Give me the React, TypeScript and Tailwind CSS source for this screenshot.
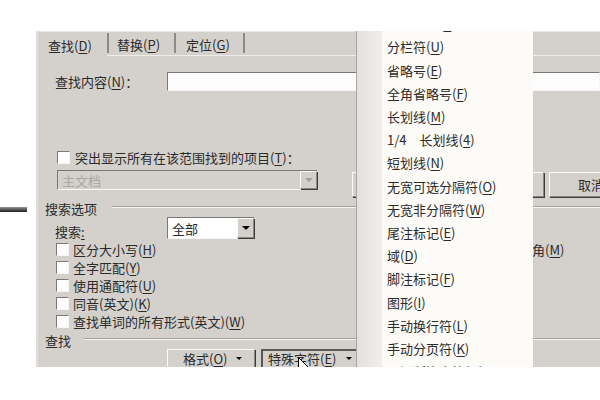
import React from 'react';

// Classic 3D edges, Windows 2000 style.
const sunken =
  'border border-t-[#7b7975] border-l-[#7b7975] border-b-[#f7f6f4] border-r-[#f7f6f4]';
const raised =
  'border border-t-[#fbfaf8] border-l-[#fbfaf8] border-b-[#8a8884] border-r-[#8a8884] shadow-[1px_1px_0_#3d3c3a]';

/** `label(K)` with the access key underlined. */
function Key({ label, k }: { label: string; k: string }) {
  return (
    <>
      {label}(<span className="underline underline-offset-2">{k}</span>)
    </>
  );
}

function Check({
  label,
  k,
  gap = 'ml-[4px]',
  colon,
}: {
  label: string;
  k: string;
  gap?: string;
  colon?: boolean;
}) {
  return (
    <div className="flex h-[18px] items-center">
      <span className={`h-[13px] w-[13px] shrink-0 bg-white ${sunken}`} />
      <span className={`${gap} whitespace-nowrap`}>
        <Key label={label} k={k} />
        {colon && '：'}
      </span>
    </div>
  );
}

function Arrow({ disabled }: { disabled?: boolean }) {
  return (
    <span
      className={`flex h-full w-[17px] shrink-0 items-center justify-center bg-[#d4d1cc] ${raised}`}
    >
      <span
        className={
          disabled
            ? 'border-x-[4px] border-t-[4px] border-x-transparent border-t-[#a19e99]'
            : 'border-x-[4px] border-t-[4px] border-x-transparent border-t-black'
        }
      />
    </span>
  );
}

function Separator() {
  return <div className="my-[2px] w-[2px] shrink-0 self-stretch bg-[#8d8a86]" />;
}

function GroupLine({ label, gap }: { label: string; gap: string }) {
  return (
    <div className="flex h-[14px] items-center pl-[9px]">
      <span className="shrink-0">{label}</span>
      <div
        className={`${gap} mb-[3px] h-[2px] flex-1 border-t border-b border-t-[#a5a29d] border-b-[#f4f2ef]`}
      />
    </div>
  );
}

const SPECIALS: [string, string][] = [
  ['段落符号', 'A'],
  ['分栏符', 'U'],
  ['省略号', 'E'],
  ['全角省略号', 'F'],
  ['长划线', 'M'],
  ['1/4\u3000长划线', '4'],
  ['短划线', 'N'],
  ['无宽可选分隔符', 'O'],
  ['无宽非分隔符', 'W'],
  ['尾注标记', 'E'],
  ['域', 'D'],
  ['脚注标记', 'F'],
  ['图形', 'I'],
  ['手动换行符', 'L'],
  ['手动分页符', 'K'],
  ['不间断连字符', 'H'],
];

function SpecialMenu() {
  return (
    <div className="absolute top-0 bottom-0 left-[320px] flex">
      {/* the pale band the menu drags along its left side */}
      <div className="w-[26px] border-l border-[#a9a6a1] bg-linear-to-r from-[#e3e1dd] to-[#f1efec]" />
      <div className="w-[151px] overflow-hidden bg-[#fdfbf8]">
        <div className="mt-[-18.8px]">
          {SPECIALS.map(([label, k], i) => (
            <div key={i} className="flex h-[23.2px] items-center pl-[5px] whitespace-nowrap">
              <Key label={label} k={k} />
            </div>
          ))}
        </div>
      </div>
    </div>
  );
}

function Cursor() {
  return (
    <svg
      className="absolute top-[326px] left-[262px]"
      width="12"
      height="18"
      viewBox="0 0 12 18"
    >
      <path
        d="M0.5 0.5 L0.5 15 L4 11.5 L6.5 17 L8.5 16 L6 10.5 L10.5 10.5 Z"
        fill="white"
        stroke="black"
      />
    </svg>
  );
}

function FindDialog() {
  return (
    <div className="relative flex-1 overflow-hidden bg-[#d4d1cc] shadow-[inset_2px_0_0_#e3e0dc,inset_0_1px_0_#e8e6e2]">
      {/* tabs */}
      <div className="flex h-[25px]">
        <div className="flex w-[71px] shrink-0 items-center pt-[3px] pl-[12px]">
          <Key label="查找" k="D" />
        </div>
        <div className="flex flex-1 border-b border-[#efedea]">
          <Separator />
          <div className="flex w-[65px] shrink-0 items-center pt-[3px] pl-[8px]">
            <Key label="替换" k="P" />
          </div>
          <Separator />
          <div className="flex w-[67px] shrink-0 items-center pt-[3px] pl-[10px]">
            <Key label="定位" k="G" />
          </div>
          <Separator />
          <div className="flex-1" />
        </div>
      </div>

      {/* find what */}
      <div className="mt-[16px] flex h-[19px] items-center">
        <span className="w-[131px] shrink-0 pl-[19px]">
          <Key label="查找内容" k="N" />：
        </span>
        <div className={`h-[19px] flex-1 bg-[#fdfdfd] ${sunken}`} />
      </div>

      <div className="mt-[57px] pl-[21px]">
        <Check label="突出显示所有在该范围找到的项目" k="T" gap="ml-[5px]" colon />
      </div>

      <div className="mt-[4px] flex h-[27px] items-start">
        <div className={`ml-[21px] flex h-[20px] w-[261px] shrink-0 items-center ${sunken}`}>
          <span className="flex-1 pl-[4px] text-[#a9a7a3]">主文档</span>
          <Arrow disabled />
        </div>
        <div className={`mt-[2px] ml-[34px] h-[25px] w-[192px] shrink-0 ${raised}`} />
        <div
          className={`mt-[2px] ml-[5px] flex h-[25px] w-[100px] shrink-0 items-center pl-[28px] ${raised}`}
        >
          取消
        </div>
      </div>

      <div className="mt-[4px]">
        <GroupLine label="搜索选项" gap="ml-[15px]" />
      </div>

      <div className="mt-[2px] flex h-[22px] items-center">
        <span className="w-[131px] shrink-0 pt-[6px] pl-[19px]">
          搜索<span className="underline underline-offset-2">:</span>
        </span>
        <div className={`flex h-[22px] w-[88px] shrink-0 items-center bg-white ${sunken}`}>
          <span className="flex-1 pl-[4px]">全部</span>
          <Arrow />
        </div>
      </div>

      <div className="mt-[1px] pl-[20px]">
        <div className="flex">
          <div className="w-[402px] shrink-0">
            <Check label="区分大小写" k="H" />
          </div>
          <Check label="区分全/半角" k="M" />
        </div>
        <Check label="全字匹配" k="Y" />
        <Check label="使用通配符" k="U" />
        <Check label="同音(英文)" k="K" />
        <Check label="查找单词的所有形式(英文)" k="W" />
      </div>

      <div className="mt-[3px]">
        <GroupLine label="查找" gap="ml-[13px]" />
      </div>

      <div className="mt-[2px] flex">
        <div
          className={`ml-[131px] flex h-[24px] w-[88px] shrink-0 items-start pt-[2px] pl-[15px] ${raised}`}
        >
          <Key label="格式" k="O" />
          <span className="mt-[5px] ml-[9px] border-x-[3px] border-t-[3px] border-x-transparent border-t-black" />
        </div>
        <div className="ml-[6px] flex h-[24px] w-[190px] shrink-0 items-start border-2 border-[#5a5855] pt-[1px] pl-[5px]">
          <Key label="特殊字符" k="E" />
          <span className="mt-[5px] ml-[9px] border-x-[3px] border-t-[3px] border-x-transparent border-t-black" />
        </div>
      </div>

      <Cursor />
      <SpecialMenu />
    </div>
  );
}

export default function App() {
  return (
    <div className="flex h-[400px] w-[600px] flex-col overflow-hidden bg-white font-['Noto_Sans_CJK_SC',sans-serif] text-[13px] leading-none text-[#2b2b2b]">
      <div className="h-[31px]" />
      <div className="flex h-[336px]">
        <div className="w-[36px] shrink-0 pt-[176px]">
          <div className="h-[5px] w-[27px] bg-linear-to-b from-[#9a9a9a] to-[#1f1f1f]" />
        </div>
        <FindDialog />
      </div>
    </div>
  );
}
